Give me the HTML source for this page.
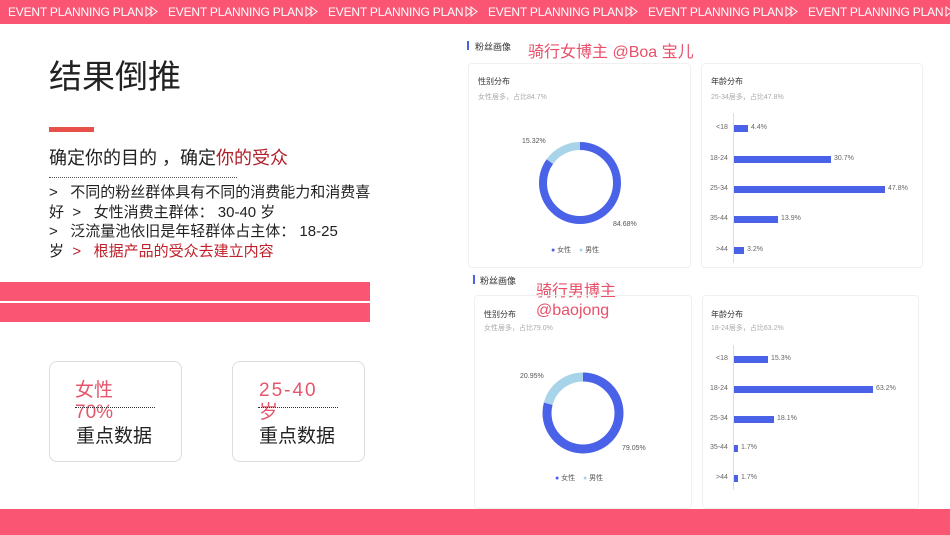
<!DOCTYPE html>
<html><head><meta charset="utf-8"><style>
*{margin:0;padding:0;box-sizing:border-box}
body{width:950px;height:535px;overflow:hidden;background:#fff;position:relative;font-family:"Liberation Sans","Noto Sans CJK SC",sans-serif;color:#222}
.a{position:absolute;white-space:nowrap}
.top{left:0;top:0;width:950px;height:24px;background:#fb5574}
.top span{position:absolute;top:5px;color:#fff;font-size:12px;letter-spacing:-0.2px}
.top svg{vertical-align:-1px;margin-left:2px}
.pk{background:#fb5574}
.card{border:1px solid #ddd;border-radius:8px}
.sc{border:1px solid #f0f0f0;border-radius:4px}
.sm{font-size:8px;color:#333}
.gr{font-size:7px;color:#aaa}
.bar{position:absolute;height:7px;background:#4a62e8}
.lb{position:absolute;font-size:7px;color:#666}
</style></head><body>
<div class="a top">
<span style="left:8px">EVENT PLANNING PLAN<svg width="14" height="11"><path d="M1 1L7 5.5L1 10Z M6 1L12 5.5L6 10Z" fill="none" stroke="#fff" stroke-width="1"/></svg></span>
<span style="left:168px">EVENT PLANNING PLAN<svg width="14" height="11"><path d="M1 1L7 5.5L1 10Z M6 1L12 5.5L6 10Z" fill="none" stroke="#fff" stroke-width="1"/></svg></span>
<span style="left:328px">EVENT PLANNING PLAN<svg width="14" height="11"><path d="M1 1L7 5.5L1 10Z M6 1L12 5.5L6 10Z" fill="none" stroke="#fff" stroke-width="1"/></svg></span>
<span style="left:488px">EVENT PLANNING PLAN<svg width="14" height="11"><path d="M1 1L7 5.5L1 10Z M6 1L12 5.5L6 10Z" fill="none" stroke="#fff" stroke-width="1"/></svg></span>
<span style="left:648px">EVENT PLANNING PLAN<svg width="14" height="11"><path d="M1 1L7 5.5L1 10Z M6 1L12 5.5L6 10Z" fill="none" stroke="#fff" stroke-width="1"/></svg></span>
<span style="left:808px">EVENT PLANNING PLAN<svg width="14" height="11"><path d="M1 1L7 5.5L1 10Z M6 1L12 5.5L6 10Z" fill="none" stroke="#fff" stroke-width="1"/></svg></span>
</div>
<div class="a" style="left:49px;top:50px;font-size:33px;color:#222">结果倒推</div>
<div class="a" style="left:49px;top:127px;width:45px;height:5px;background:#e8504a"></div>
<div class="a" style="left:49px;top:144px;font-size:18px">确定你的目的 ，确定<span style="color:#b0202a">你的受众</span></div>
<div class="a" style="left:49px;top:177px;width:188px;border-top:1px dotted #555"></div>
<div class="a" style="left:49px;top:183px;font-size:15px;line-height:19.5px">&gt;&nbsp;&nbsp; 不同的粉丝群体具有不同的消费能力和消费喜<br>好 &nbsp;&gt;&nbsp;&nbsp; 女性消费主群体： 30-40 岁<br>&gt;&nbsp;&nbsp; 泛流量池依旧是年轻群体占主体： 18-25<br>岁 <span style="color:#c0202a">&nbsp;&gt;&nbsp;&nbsp; 根据产品的受众去建立内容</span></div>
<div class="a pk" style="left:0;top:282px;width:370px;height:19px"></div>
<div class="a pk" style="left:0;top:303px;width:370px;height:19px"></div>
<div class="a card" style="left:49px;top:361px;width:133px;height:101px"></div>
<div class="a card" style="left:232px;top:361px;width:133px;height:101px"></div>
<div class="a" style="left:75px;top:380px;font-size:19px;line-height:22px;color:#e5566c">女性<br>70%</div>
<div class="a" style="left:75px;top:407px;width:80px;border-top:1px dotted #333"></div>
<div class="a" style="left:76px;top:421px;font-size:19px">重点数据</div>
<div class="a" style="left:259px;top:380px;font-size:19px;line-height:22px;color:#e5566c;letter-spacing:2px">25-40<br>岁</div>
<div class="a" style="left:258px;top:407px;width:80px;border-top:1px dotted #333"></div>
<div class="a" style="left:259px;top:421px;font-size:19px">重点数据</div>
<div class="a pk" style="left:0;top:509px;width:950px;height:26px"></div>

<div class="a" style="left:467px;top:41px;width:2px;height:9px;background:#4a62e8"></div>
<div class="a sm" style="left:475px;top:40px;font-size:9px">粉丝画像</div>
<div class="a" style="left:528px;top:38px;font-size:16px;color:#e8506a">骑行女博主 @Boa 宝儿</div>
<div class="a sc" style="left:468px;top:63px;width:223px;height:205px"></div>
<div class="a sc" style="left:701px;top:63px;width:222px;height:205px"></div>
<div class="a sm" style="left:478px;top:76px">性别分布</div>
<div class="a gr" style="left:478px;top:92px">女性居多，占比84.7%</div>
<svg class="a" style="left:530px;top:133px" width="100" height="100"><g transform="rotate(-90 50 50)"><circle cx="50" cy="50" r="37" fill="none" stroke="#4a62e8" stroke-width="8" stroke-dasharray="196.9 300"/><circle cx="50" cy="50" r="37" fill="none" stroke="#a8d4ea" stroke-width="8" stroke-dasharray="0 196.9 35.6 300"/></g></svg>
<div class="a gr" style="left:522px;top:138px;color:#555">15.32%</div>
<div class="a gr" style="left:613px;top:221px;color:#555">84.68%</div>
<div class="a gr" style="left:551px;top:245px;color:#555"><span style="color:#4a62e8">●</span> 女性 &nbsp;&nbsp;&nbsp;<span style="color:#a8d4ea">●</span> 男性</div>
<div class="a sm" style="left:711px;top:76px">年龄分布</div>
<div class="a gr" style="left:711px;top:92px">25-34居多，占比47.8%</div>
<div class="a" style="left:733px;top:113px;width:1px;height:150px;background:#ddd"></div>
<div class="lb" style="left:716px;top:124px">&lt;18</div><div class="bar" style="left:734px;top:125px;width:14px"></div><div class="lb" style="left:751px;top:124px">4.4%</div>
<div class="lb" style="left:710px;top:155px">18-24</div><div class="bar" style="left:734px;top:156px;width:97px"></div><div class="lb" style="left:834px;top:155px">30.7%</div>
<div class="lb" style="left:710px;top:185px">25-34</div><div class="bar" style="left:734px;top:186px;width:151px"></div><div class="lb" style="left:888px;top:185px">47.8%</div>
<div class="lb" style="left:710px;top:215px">35-44</div><div class="bar" style="left:734px;top:216px;width:44px"></div><div class="lb" style="left:781px;top:215px">13.9%</div>
<div class="lb" style="left:716px;top:246px">&gt;44</div><div class="bar" style="left:734px;top:247px;width:10px"></div><div class="lb" style="left:747px;top:246px">3.2%</div>

<div class="a" style="left:473px;top:275px;width:2px;height:9px;background:#4a62e8"></div>
<div class="a sm" style="left:480px;top:274px;font-size:9px">粉丝画像</div>
<div class="a" style="left:536px;top:282px;font-size:16px;line-height:19px;color:#e8506a">骑行男博主<br>@baojong</div>
<div class="a sc" style="left:474px;top:295px;width:218px;height:214px"></div>
<div class="a sc" style="left:702px;top:295px;width:217px;height:214px"></div>
<div class="a sm" style="left:484px;top:309px">性别分布</div>
<div class="a gr" style="left:484px;top:323px">女性居多，占比79.0%</div>
<svg class="a" style="left:533px;top:363px" width="100" height="100"><g transform="rotate(-90 50 50)"><circle cx="50" cy="50" r="36" fill="none" stroke="#4a62e8" stroke-width="9" stroke-dasharray="178.8 300"/><circle cx="50" cy="50" r="36" fill="none" stroke="#a8d4ea" stroke-width="9" stroke-dasharray="0 178.8 47.4 300"/></g></svg>
<div class="a gr" style="left:520px;top:373px;color:#555">20.95%</div>
<div class="a gr" style="left:622px;top:445px;color:#555">79.05%</div>
<div class="a gr" style="left:555px;top:473px;color:#555"><span style="color:#4a62e8">●</span> 女性 &nbsp;&nbsp;&nbsp;<span style="color:#a8d4ea">●</span> 男性</div>
<div class="a sm" style="left:711px;top:309px">年龄分布</div>
<div class="a gr" style="left:711px;top:323px">18-24居多，占比63.2%</div>
<div class="a" style="left:733px;top:345px;width:1px;height:145px;background:#ddd"></div>
<div class="lb" style="left:716px;top:355px">&lt;18</div><div class="bar" style="left:734px;top:356px;width:34px"></div><div class="lb" style="left:771px;top:355px">15.3%</div>
<div class="lb" style="left:710px;top:385px">18-24</div><div class="bar" style="left:734px;top:386px;width:139px"></div><div class="lb" style="left:876px;top:385px">63.2%</div>
<div class="lb" style="left:710px;top:415px">25-34</div><div class="bar" style="left:734px;top:416px;width:40px"></div><div class="lb" style="left:777px;top:415px">18.1%</div>
<div class="lb" style="left:710px;top:444px">35-44</div><div class="bar" style="left:734px;top:445px;width:4px"></div><div class="lb" style="left:741px;top:444px">1.7%</div>
<div class="lb" style="left:716px;top:474px">&gt;44</div><div class="bar" style="left:734px;top:475px;width:4px"></div><div class="lb" style="left:741px;top:474px">1.7%</div>
</body></html>
